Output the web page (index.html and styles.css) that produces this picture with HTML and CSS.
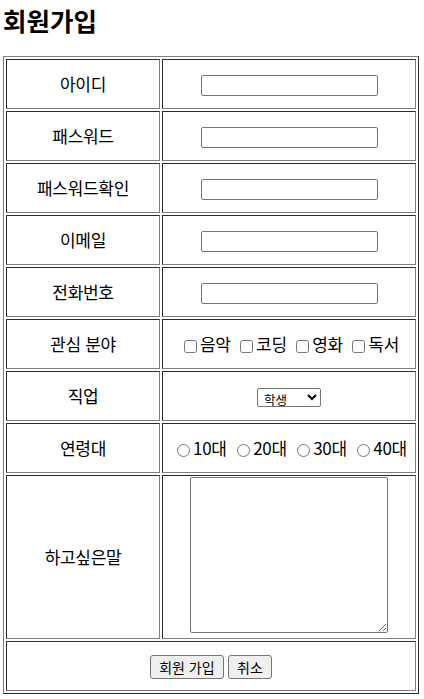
FILE: index.html
```html
<!DOCTYPE html>
<html lang="ko">
<head>
<meta charset="utf-8">
<title>회원가입</title>
<link rel="stylesheet" href="styles.css">
</head>
<body>
<h2 class="title">회원가입</h2>
<form class="form">
<table class="join">
  <tr>
    <td class="label">아이디</td>
    <td class="field"><input type="text" class="text"></td>
  </tr>
  <tr>
    <td class="label">패스워드</td>
    <td class="field"><input type="password" class="text"></td>
  </tr>
  <tr>
    <td class="label">패스워드확인</td>
    <td class="field"><input type="password" class="text"></td>
  </tr>
  <tr>
    <td class="label">이메일</td>
    <td class="field"><input type="text" class="text"></td>
  </tr>
  <tr>
    <td class="label">전화번호</td>
    <td class="field"><input type="text" class="text"></td>
  </tr>
  <tr>
    <td class="label">관심 분야</td>
    <td class="field"><input type="checkbox" class="check">음악 <input type="checkbox" class="check">코딩 <input type="checkbox" class="check">영화 <input type="checkbox" class="check">독서</td>
  </tr>
  <tr>
    <td class="label">직업</td>
    <td class="field"><select class="job"><option>학생</option><option>회사원</option><option>기타</option></select></td>
  </tr>
  <tr>
    <td class="label">연령대</td>
    <td class="field"><input type="radio" name="age" class="radio">10대 <input type="radio" name="age" class="radio">20대 <input type="radio" name="age" class="radio">30대 <input type="radio" name="age" class="radio">40대</td>
  </tr>
  <tr>
    <td class="label tall">하고싶은말</td>
    <td class="field tall top"><textarea class="memo"></textarea></td>
  </tr>
  <tr>
    <td class="field" colspan="2"><button type="submit" class="btn">회원 가입</button> <button type="reset" class="btn">취소</button></td>
  </tr>
</table>
</form>
</body>
</html>
```

FILE: styles.css
```css
html, body {
  background: #ffffff;
}
body {
  margin: 3px 0 0 3px;
  font-family: "Noto Sans CJK KR", "Noto Sans", sans-serif;
  font-size: 17px;
  letter-spacing: -0.3px;
  color: #000000;
}
.title {
  margin: 0 0 19px 0;
  font-size: 25.5px;
  line-height: 34px;
  font-weight: 700;
  letter-spacing: 0;
}
.form {
  margin: 0;
}
.join {
  width: 416px;
  border: 1px outset #808080;
  border-spacing: 2px;
  border-collapse: separate;
}
.join td {
  box-sizing: border-box;
  height: 50px;
  padding: 1px;
  border: 1px inset #808080;
  text-align: center;
  vertical-align: middle;
  line-height: 22px;
}
.join td.label {
  width: 154px;
}
.join td.tall {
  height: 164px;
}
.join td.top {
  vertical-align: top;
}
.text {
  box-sizing: border-box;
  width: 177px;
  height: 21px;
  margin: 0;
  padding: 1px 2px;
  border: 1px solid #767676;
  border-radius: 2px;
  vertical-align: middle;
}
.check {
  width: 13px;
  height: 13px;
  margin: 0 3px 0 5px;
  vertical-align: -2px;
}
.radio {
  width: 13px;
  height: 13px;
  margin: 0 3px 0 6px;
  vertical-align: -2px;
}
.job {
  box-sizing: border-box;
  width: 64px;
  height: 19px;
  padding: 0 0 0 2px;
  font-family: "Noto Sans CJK KR", sans-serif;
  font-size: 12.5px;
  letter-spacing: 0;
  border: 1px solid #767676;
  border-radius: 2px;
  background: #ffffff;
  vertical-align: middle;
}
.memo {
  display: block;
  box-sizing: border-box;
  width: 198px;
  height: 156px;
  margin: 0 auto;
  border: 1px solid #767676;
  border-radius: 2px;
}
.btn {
  box-sizing: border-box;
  height: 24px;
  padding: 0 8px;
  font-family: "Noto Sans CJK KR", sans-serif;
  font-size: 14px;
  letter-spacing: 0;
  line-height: 20px;
  color: #000000;
  background: #efefef;
  border: 1px solid #767676;
  border-radius: 3px;
  vertical-align: middle;
}
```
